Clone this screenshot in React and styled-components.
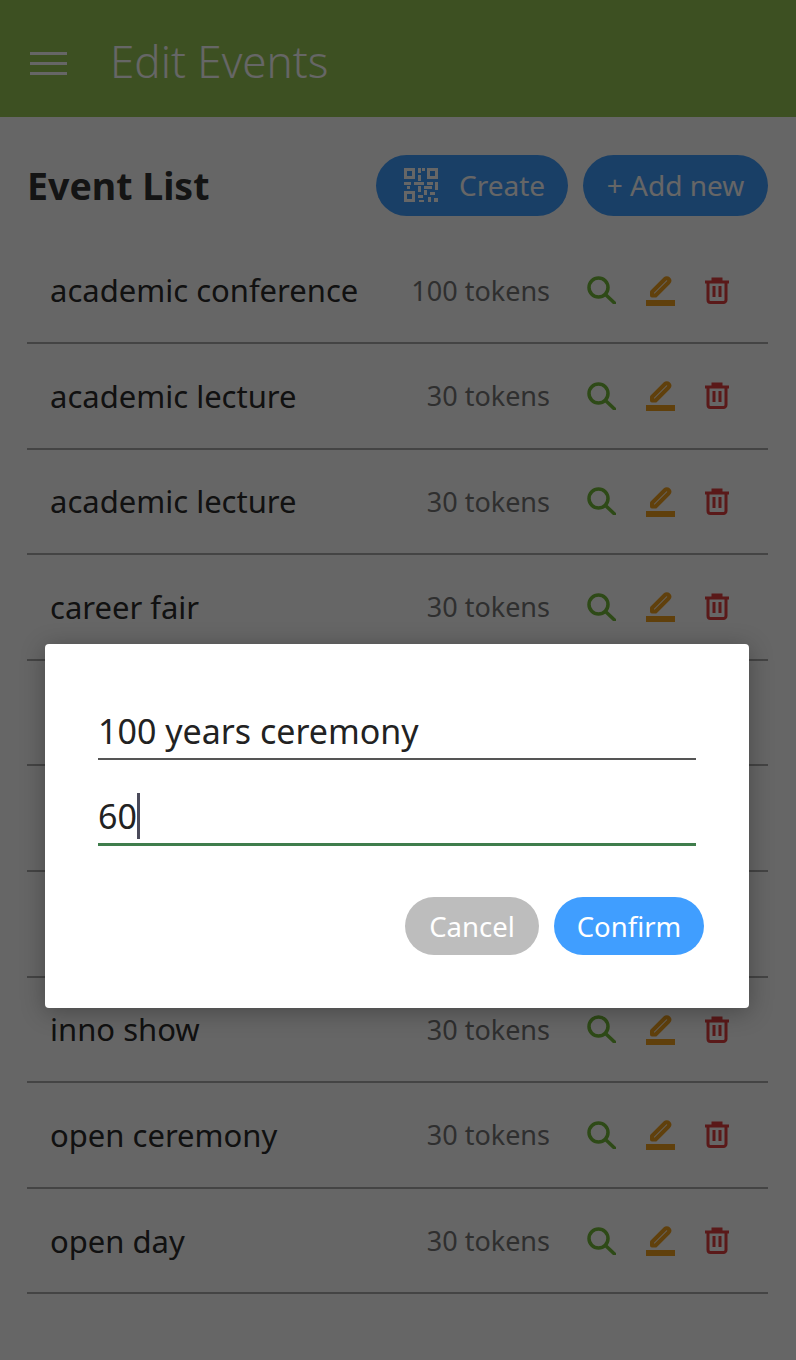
import React from "react";
import styled, { createGlobalStyle } from "styled-components";

const Global = createGlobalStyle`
  html, body { margin: 0; padding: 0; background: #fff; }
  body { font-family: "Noto Sans", "Open Sans", sans-serif; color: #2b2b2b; }
  * { box-sizing: border-box; }
`;

const Page = styled.div`
  position: relative;
  width: 796px;
  height: 1360px;
  overflow: hidden;
  background: #fff;
`;

const Header = styled.header`
  height: 117px;
  background: #98c855;
  display: flex;
  align-items: center;
  padding: 4px 0 0 30px;
  gap: 43px;
  color: #fff;
`;

const Burger = styled.div`
  width: 37px;
  margin-top: 6px;
  display: flex;
  flex-direction: column;
  gap: 6.5px;
  span {
    height: 3.5px;
    background: #fff;
  }
`;

const HeaderTitle = styled.h1`
  margin: 0;
  font-size: 44px;
  font-weight: 300;
  line-height: 1;
`;

const Content = styled.main`
  padding: 38px 28px 0 27px;
`;

const TitleRow = styled.div`
  height: 61px;
  display: flex;
  align-items: center;
  margin-bottom: 22.4px;
`;

const ListTitle = styled.h2`
  margin: 0 auto 0 0;
  font-size: 37.5px;
  font-weight: 700;
  color: #333;
`;

const PillButton = styled.button`
  height: 61px;
  border: 0;
  border-radius: 31px;
  background: #409eff;
  color: #fff;
  font: 400 28px "Noto Sans", sans-serif;
  width: ${(p) => p.$width}px;
  margin-left: ${(p) => p.$gap}px;
  display: flex;
  align-items: center;
  justify-content: center;
  gap: 20px;
  padding: 0 0 2px;
`;

const Row = styled.div`
  height: 105.6px;
  display: flex;
  align-items: center;
  padding-left: 23px;
  border-bottom: 2px solid #aaa;
`;

const Name = styled.span`
  font-size: 31px;
  margin-right: auto;
`;

const Tokens = styled.span`
  font-size: 27px;
  color: #777;
  margin-right: 37px;
`;

const Icons = styled.div`
  display: flex;
  align-items: center;
  gap: 30px;
  margin-right: 39px;
`;

const Overlay = styled.div`
  position: absolute;
  inset: 0;
  background: rgba(0, 0, 0, 0.6);
  padding: 644px 47px 0 45px;
`;

const Dialog = styled.div`
  height: 364px;
  background: #fff;
  border-radius: 4px;
  padding: 54px 45px 0 53px;
  box-shadow: 0 4px 24px rgba(0, 0, 0, 0.3);
`;

const Field = styled.div`
  width: 598px;
  height: ${(p) => (p.$active ? 86 : 62)}px;
  display: flex;
  align-items: flex-end;
  font-size: 34px;
  line-height: 53px;
  color: #222;
  border-bottom: ${(p) => (p.$active ? "3px solid #3f7d4c" : "2px solid #555")};
`;

const Caret = styled.span`
  width: 3.5px;
  height: 46px;
  background: #4a4a5a;
  margin-bottom: 4px;
`;

const DialogActions = styled.div`
  display: flex;
  justify-content: flex-end;
  gap: 15px;
  margin-top: 51px;
`;

const DialogButton = styled.button`
  height: 58px;
  border: 0;
  border-radius: 29px;
  width: ${(p) => p.$width}px;
  background: ${(p) => p.$bg};
  color: #fff;
  font: 400 27.5px "Noto Sans", sans-serif;
  padding: 0;
`;

const QrSvg = styled.svg`
  margin-left: 4px;
`;

const QrIcon = () => (
  <QrSvg width="36" height="36" viewBox="0 0 36 36" fill="#fff">
    <path fillRule="evenodd" d="M1 1h11v11H1zM4 4v5h5V4zM24 1h11v11H24zM27 4v5h5V4zM1 24h11v11H1zM4 27v5h5v-5z" />
    <path d="M15 1h3v5h-3zM19 1h3v3h-3zM15 8h3v6h-3zM1 15h7v3H1zM11 15h10v3H11zM24 15h6v3h-6zM32 15h3v8h-3zM4 19h3v3H4zM15 19h3v6h-3zM21 19h8v3h-8zM21 23h3v5h-3zM15 28h5v3h-5zM27 25h5v3h-5zM25 30h3v5h-3zM31 31h4v4h-4zM16 33h5v2h-5z" />
  </QrSvg>
);

const SearchIcon = () => (
  <svg width="29" height="28" viewBox="0 0 29 28" fill="none" stroke="#74b83a" strokeWidth="3.5">
    <circle cx="11.5" cy="11.5" r="9.5" />
    <path d="M18.5 18.5l9 8.5" strokeLinecap="round" />
  </svg>
);

const EditIcon = () => (
  <svg width="29" height="31" viewBox="0 0 29 31" fill="none">
    <path d="M6 17L19 4c1-1 2.5-1 3.5 0s1 2.5 0 3.5L9.5 20.5H6z" stroke="#f0a020" strokeWidth="4" strokeLinejoin="round" />
    <rect x="0" y="25" width="29" height="6" fill="#f0a020" />
  </svg>
);

const TrashIcon = () => (
  <svg width="24" height="27" viewBox="0 0 24 27" fill="none" stroke="#e04040" strokeWidth="3">
    <path d="M0 5h24M8 5V2h8v3M3 5v18a2.5 2.5 0 0 0 2.5 2.5h13A2.5 2.5 0 0 0 21 23V5M9 9v11M15 9v11" />
  </svg>
);

const events = [
  { name: "academic conference", tokens: "100 tokens" },
  { name: "academic lecture", tokens: "30 tokens" },
  { name: "academic lecture", tokens: "30 tokens" },
  { name: "career fair", tokens: "30 tokens" },
  { name: "", tokens: "" },
  { name: "", tokens: "" },
  { name: "", tokens: "" },
  { name: "inno show", tokens: "30 tokens" },
  { name: "open ceremony", tokens: "30 tokens" },
  { name: "open day", tokens: "30 tokens" },
];

export default function App() {
  return (
    <Page>
      <Global />
      <Header>
        <Burger>
          <span />
          <span />
          <span />
        </Burger>
        <HeaderTitle>Edit Events</HeaderTitle>
      </Header>
      <Content>
        <TitleRow>
          <ListTitle>Event List</ListTitle>
          <PillButton $width={192} $gap={0}>
            <QrIcon />
            Create
          </PillButton>
          <PillButton $width={185} $gap={15}>+ Add new</PillButton>
        </TitleRow>
        {events.map((ev, i) => (
          <Row key={i}>
            <Name>{ev.name}</Name>
            {ev.name && (
              <>
                <Tokens>{ev.tokens}</Tokens>
                <Icons>
                  <SearchIcon />
                  <EditIcon />
                  <TrashIcon />
                </Icons>
              </>
            )}
          </Row>
        ))}
      </Content>
      <Overlay>
        <Dialog>
          <Field>100 years ceremony</Field>
          <Field $active>
            60
            <Caret />
          </Field>
          <DialogActions>
            <DialogButton $width={134} $bg="#bdbdbd">Cancel</DialogButton>
            <DialogButton $width={150} $bg="#409eff">Confirm</DialogButton>
          </DialogActions>
        </Dialog>
      </Overlay>
    </Page>
  );
}
